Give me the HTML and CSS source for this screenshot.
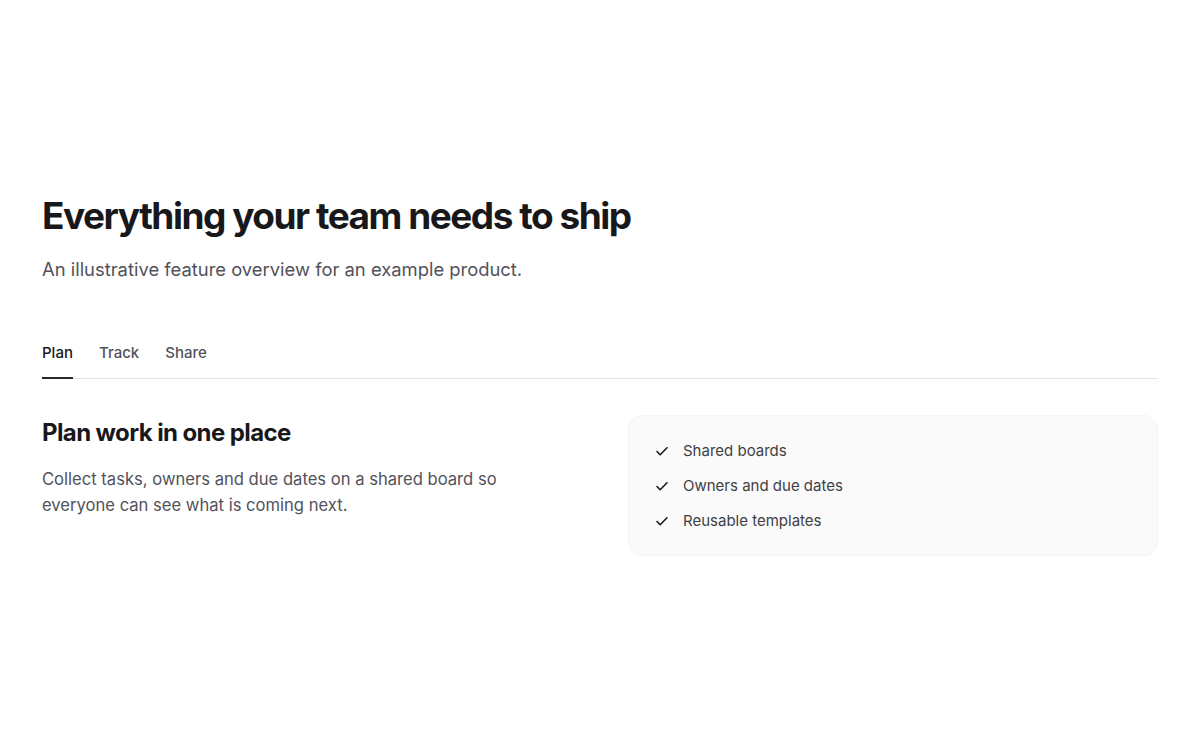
FILE: index.html
```html
<!DOCTYPE html>
<html>
  <head>
    <title>Features</title>
    <link rel="stylesheet" href="styles.css">
  </head>
  <body>
    <section class="features">
      <h1 class="title">Everything your team needs to ship</h1>
      <p class="lead">An illustrative feature overview for an example product.</p>

      <div class="tabs">
        <button class="tab active">Plan</button>
        <button class="tab">Track</button>
        <button class="tab">Share</button>
      </div>

      <div class="panel">
        <div class="panel-text">
          <h2>Plan work in one place</h2>
          <p>Collect tasks, owners and due dates on a shared board so everyone can see what is coming next.</p>
        </div>
        <ul class="card">
          <li>
            <svg viewBox="0 0 16 16" width="16" height="16"><path d="M3 8.5l3.2 3.2L13 4.8" fill="none" stroke="#18181b" stroke-width="1.6" stroke-linecap="round" stroke-linejoin="round"/></svg>
            Shared boards
          </li>
          <li>
            <svg viewBox="0 0 16 16" width="16" height="16"><path d="M3 8.5l3.2 3.2L13 4.8" fill="none" stroke="#18181b" stroke-width="1.6" stroke-linecap="round" stroke-linejoin="round"/></svg>
            Owners and due dates
          </li>
          <li>
            <svg viewBox="0 0 16 16" width="16" height="16"><path d="M3 8.5l3.2 3.2L13 4.8" fill="none" stroke="#18181b" stroke-width="1.6" stroke-linecap="round" stroke-linejoin="round"/></svg>
            Reusable templates
          </li>
        </ul>
      </div>
    </section>
  </body>
</html>
```

FILE: styles.css
```css
* {
  margin: 0;
  padding: 0;
  box-sizing: border-box;
}

body {
  background-color: #ffffff;
  font-family: Inter, "Liberation Sans", sans-serif;
  color: #18181b;
}

.features {
  padding: 194px 42px 0;
}

.title {
  font-size: 37px;
  line-height: 44px;
  font-weight: 700;
  letter-spacing: -0.04em;
  color: #18181b;
}

.lead {
  margin-top: 17px;
  font-size: 18.4px;
  line-height: 28px;
  color: #52525b;
}

.tabs {
  display: flex;
  gap: 26px;
  margin-top: 56px;
  border-bottom: 1px solid #e4e4e7;
}

.tab {
  background: none;
  border: none;
  font-family: inherit;
  font-size: 15px;
  font-weight: 500;
  line-height: 22px;
  color: #52525b;
  padding: 3px 0 13px;
  border-bottom: 2px solid transparent;
  margin-bottom: -1px;
  cursor: pointer;
}

.tab.active {
  color: #18181b;
  border-bottom-color: #27272a;
}

.panel {
  display: grid;
  grid-template-columns: 1fr 1fr;
  gap: 56px;
  margin-top: 36px;
}

.panel-text {
  padding-top: 2px;
}

.panel-text h2 {
  font-size: 24px;
  line-height: 32px;
  font-weight: 700;
  letter-spacing: -0.025em;
  color: #18181b;
}

.panel-text p {
  margin-top: 17px;
  max-width: 480px;
  font-size: 16.6px;
  line-height: 26px;
  color: #52525b;
}

.card {
  list-style: none;
  background-color: #fafafa;
  border: 1px solid #f4f4f5;
  border-radius: 14px;
  padding: 23px 25px;
  display: flex;
  flex-direction: column;
  gap: 12px;
}

.card li {
  display: flex;
  align-items: center;
  gap: 13px;
  font-size: 15px;
  line-height: 23px;
  color: #3f3f46;
}
```
